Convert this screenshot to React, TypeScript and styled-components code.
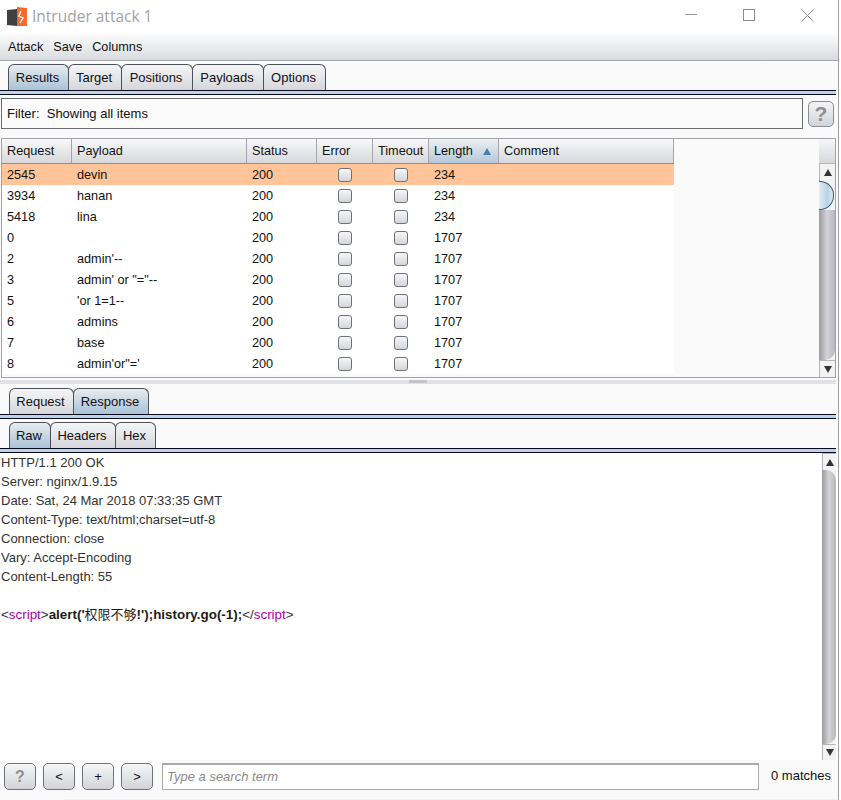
import React from "react";
import styled, { createGlobalStyle } from "styled-components";

const Global = createGlobalStyle`
  html, body { margin: 0; padding: 0; background: #fff; }
  body { font-family: "Liberation Sans", Arial, sans-serif; font-size: 12px; color: #111; }
  * { box-sizing: border-box; }
`;

const Frame = styled.div`
  width: 839px; height: 800px; display: flex; flex-direction: column;
  background: #fafafa; border-right: 1px solid #a0a0a0; overflow: hidden;
`;
const TitleBar = styled.div`
  height: 34px; flex: none; background: #fff; display: flex; align-items: center; padding: 0 1px 0 7px;
`;
const TitleText = styled.div`
  margin-left: 5px; font-family: "Open Sans", "Noto Sans", sans-serif; font-size: 15.5px; color: #a3a3a3; flex: 1; padding-bottom: 2px;
`;
const WinBtn = styled.div`
  width: 58.5px; height: 30px; display: flex; align-items: center; justify-content: center; margin-bottom: 4px;
  svg { display: block; }
`;
const MenuBar = styled.div`
  height: 27px; flex: none; display: flex; align-items: center; gap: 10px; padding: 0 0 0 8px; font-size: 12.7px;
  background: linear-gradient(#fbfbfb 0%, #f1f2f3 30%, #d9dbdf 100%); border-bottom: 1px solid #a3a5ab;
`;
const TabStrip = styled.div<{ $top: number; $left: number }>`
  display: flex; flex: none; padding: ${(p) => p.$top}px 0 0 ${(p) => p.$left}px; height: ${(p) => p.$top + 26}px;
`;
const Tab = styled.div<{ $active?: boolean; $w: number }>`
  width: ${(p) => p.$w}px; height: 26px; display: flex; align-items: center; justify-content: center; padding-right: 2px;
  font-size: 13px; margin-right: -1px; border: 1px solid #4d5058; border-bottom: none; border-radius: 6px 6px 0 0;
  background: ${(p) => p.$active ? "linear-gradient(#e9ecef 0%, #c8d6e3 50%, #aac3d8 100%)" : "linear-gradient(#f5f5f6, #d5d7dc)"};
`;
const TabRule = styled.div`
  flex: none; height: 5px; margin-right: 2px; background: #bdd3e6; border-top: 1px solid #0a0a1e; border-bottom: 1px solid #0a0a1e;
`;
const FilterRow = styled.div`
  display: flex; flex: none; align-items: center; padding: 3px 4px 0 1px; height: 34px;
`;
const FilterBox = styled.div`
  width: 802px; height: 31px; border: 1px solid #6b6b6b; display: flex; align-items: center; padding-left: 5px; font-size: 13px; background: #fbfbfb;
`;
const HelpBtn = styled.div`
  width: 26px; height: 26px; margin-left: 5px; border: 1px solid #8b8d92; border-radius: 5px; display: flex; align-items: center; justify-content: center;
  font: bold 21px "Liberation Sans", sans-serif; color: #8f8f8f; background: linear-gradient(#f4f4f5, #d3d5da);
`;
const TablePanel = styled.div`
  flex: none; margin: 9px 3px 0 1px; height: 240px; border: 1px solid #a0a2a8; display: flex; background: #fafafa; width: 835px;
`;
const TableCol = styled.div`
  width: 672px; flex: none; display: flex; flex-direction: column;
`;
const Row = styled.div<{ $hl?: boolean }>`
  display: grid; grid-template-columns: 70px 175px 70px 56px 56px 70px 175px; height: 21px; flex: none; align-items: center;
  background: ${(p) => (p.$hl ? "#ffc599" : "#fff")};
`;
const HeadRow = styled(Row)`
  height: 25px; background: none; border-bottom: 1px solid #8c8e94;
`;
const HeadCell = styled.div<{ $sorted?: boolean }>`
  height: 100%; display: flex; align-items: center; justify-content: space-between; padding: 0 5px; font-size: 12.7px;
  border-right: 1px solid #a3a5ab;
  background: ${(p) => p.$sorted ? "linear-gradient(#eef0f2, #b4c8da)" : "linear-gradient(#f8f8f9, #d6d8dc)"};
`;
const Cell = styled.div`
  padding-left: 5px; font-size: 12.7px; white-space: nowrap;
`;
const CheckCell = styled.div`
  display: flex; justify-content: center;
`;
const Check = styled.div`
  width: 14px; height: 14px; border: 1px solid #6f7178; border-radius: 3px; background: linear-gradient(#f7f7f8, #d4d6da);
`;
const SortMark = styled.div`
  width: 0; height: 0; border-left: 4px solid transparent; border-right: 4px solid transparent; border-bottom: 7px solid #4b7fae; margin-right: 2px;
`;
const TableScroll = styled.div`
  width: 16px; flex: none; margin-left: auto; display: flex; flex-direction: column; background: #f3f3f4;
`;
const ScrollCorner = styled.div`
  height: 24px; flex: none; background: linear-gradient(#f6f6f7, #d6d8dc);
`;
const ArrowBtn = styled.div<{ $down?: boolean; $h: number }>`
  height: ${(p) => p.$h}px; flex: none; display: flex; align-items: center; justify-content: center;
  background: #f3f3f4; border-left: 1px solid #b5b6ba; border-top: 1px solid #b5b6ba;
  &::after {
    content: ""; width: 0; height: 0; border-left: 4px solid transparent; border-right: 4px solid transparent;
    ${(p) => (p.$down ? "border-top: 7px solid #333;" : "border-bottom: 7px solid #333;")}
  }
`;
const Knob = styled.div`
  height: 29px; flex: none; width: 15px; border: 1px solid #3f5a76; border-left: none;
  border-radius: 0 14px 14px 0; background: linear-gradient(90deg, #e3edf5, #b9d2e6 60%, #dfe9f1);
`;
const Thumb = styled.div<{ $roundTop?: boolean }>`
  flex: 1; border-bottom-right-radius: 10px; border-top-right-radius: ${(p) => (p.$roundTop ? "10px" : "0")};
  background: linear-gradient(90deg, #9b9b9e 0%, #d4d4d8 50%, #b7b7bb 100%);
`;
const Splitter = styled.div`
  flex: none; height: 10px; padding-top: 2px;
`;
const SplitLine = styled.div`
  height: 4px; margin-right: 2px; background: #dfe1e5; display: flex; justify-content: center;
`;
const Grip = styled.div`
  width: 18px; height: 3px; background: #c2c4c8;
`;
const ContentRow = styled.div`
  flex: 1; display: flex; min-height: 0; background: #fff;
`;
const Raw = styled.div`
  flex: 1; font-size: 13px; color: #333; line-height: 19px;
`;
const Line = styled.div`
  height: 19px; padding-left: 1px; white-space: pre;
`;
const MarkupLine = styled(Line)`
  font-size: 13.4px;
`;
const Tag = styled.span` color: #b000b0; `;
const Bold = styled.span` font-weight: bold; color: #1c1c1c; `;
const Cjk = styled.span`
  font-family: "Noto Sans CJK SC", sans-serif; font-weight: 400; font-size: 13px; line-height: 0;
`;
const RawScroll = styled.div`
  width: 14px; flex: none; margin-right: 2px; display: flex; flex-direction: column; background: #f3f3f4;
`;
const BottomBar = styled.div`
  flex: none; height: 35px; display: flex; align-items: flex-start; padding: 3px 0 0 4px; margin-bottom: 4px;
`;
const BottomEdge = styled.div`
  flex: none; height: 1px; margin-left: 63px; background: #fdeeee;
`;
const NavBtn = styled.div<{ $help?: boolean }>`
  width: 32px; height: 27px; margin-right: 7px; border: 1px solid #6f7178; border-radius: 5px; display: flex; align-items: center; justify-content: center;
  background: linear-gradient(#f6f6f7, #d2d4d9); font-size: ${(p) => (p.$help ? "16px" : "13px")};
  font-weight: ${(p) => (p.$help ? "bold" : "normal")}; color: ${(p) => (p.$help ? "#8f8f8f" : "#111")};
`;
const SearchBox = styled.div`
  width: 597px; height: 27px; margin-left: 2px; border: 1px solid #a9a9a9; border-top-width: 2px; background: #fff; display: flex; align-items: center; padding: 0 0 2px 4px;
  font-style: italic; font-size: 13px; color: #8a8a8a;
`;
const Matches = styled.div`
  margin-left: 12px; font-size: 13px; line-height: 26px; white-space: nowrap;
`;

const rows = [
  ["2545", "devin", "234"], ["3934", "hanan", "234"], ["5418", "lina", "234"], ["0", "", "1707"], ["2", "admin'--", "1707"],
  ["3", "admin' or \"=\"--", "1707"], ["5", "'or 1=1--", "1707"], ["6", "admins", "1707"], ["7", "base", "1707"], ["8", "admin'or\"='", "1707"],
];
const mainTabs: [string, number][] = [["Results", 61], ["Target", 54], ["Positions", 72], ["Payloads", 72], ["Options", 63]];
const headers = ["Request", "Payload", "Status", "Error", "Timeout", "Length", "Comment"];

export default function App() {
  return (
    <Frame>
      <Global />
      <TitleBar>
        <svg width="20" height="20" viewBox="0 0 20 20">
          <polygon points="0,3 10,2 10,19 0,18" fill="#3f3f3f" />
          <polygon points="10,0 20,1 20,19 10,19" fill="#f26b2a" />
          <path d="M14 4 L12 9 L16 11 L13 16" stroke="#fff" strokeWidth="1.3" fill="none" />
        </svg>
        <TitleText>Intruder attack 1</TitleText>
        <WinBtn><svg width="12" height="2"><rect width="12" height="1" fill="#999" /></svg></WinBtn>
        <WinBtn><svg width="12" height="12"><rect x=".5" y=".5" width="11" height="11" fill="none" stroke="#8a8a8a" /></svg></WinBtn>
        <WinBtn><svg width="13" height="13"><path d="M.5 .5 L12.5 12.5 M12.5 .5 L.5 12.5" stroke="#8a8a8a" /></svg></WinBtn>
      </TitleBar>
      <MenuBar><span>Attack</span><span>Save</span><span>Columns</span></MenuBar>
      <TabStrip $top={3} $left={8}>
        {mainTabs.map(([t, w], i) => <Tab key={t} $w={w} $active={i === 0}>{t}</Tab>)}
      </TabStrip>
      <TabRule />
      <FilterRow>
        <FilterBox>Filter:&nbsp; Showing all items</FilterBox>
        <HelpBtn>?</HelpBtn>
      </FilterRow>
      <TablePanel>
        <TableCol>
          <HeadRow>
            {headers.map((h) => (
              <HeadCell key={h} $sorted={h === "Length"}>{h}{h === "Length" && <SortMark />}</HeadCell>
            ))}
          </HeadRow>
          {rows.map((r, i) => (
            <Row key={r[0]} $hl={i === 0}>
              <Cell>{r[0]}</Cell>
              <Cell>{r[1]}</Cell>
              <Cell>200</Cell>
              <CheckCell><Check /></CheckCell>
              <CheckCell><Check /></CheckCell>
              <Cell>{r[2]}</Cell>
              <Cell />
            </Row>
          ))}
        </TableCol>
        <TableScroll>
          <ScrollCorner />
          <ArrowBtn $h={18} />
          <Knob />
          <Thumb />
          <ArrowBtn $h={17} $down />
        </TableScroll>
      </TablePanel>
      <Splitter><SplitLine><Grip /></SplitLine></Splitter>
      <TabStrip $top={0} $left={9}>
        <Tab $w={65}>Request</Tab>
        <Tab $w={76} $active>Response</Tab>
      </TabStrip>
      <TabRule />
      <TabStrip $top={3} $left={9}>
        <Tab $w={42} $active>Raw</Tab>
        <Tab $w={66}>Headers</Tab>
        <Tab $w={41}>Hex</Tab>
      </TabStrip>
      <TabRule />
      <ContentRow>
        <Raw>
          <Line>HTTP/1.1 200 OK</Line>
          <Line>Server: nginx/1.9.15</Line>
          <Line>Date: Sat, 24 Mar 2018 07:33:35 GMT</Line>
          <Line>Content-Type: text/html;charset=utf-8</Line>
          <Line>Connection: close</Line>
          <Line>Vary: Accept-Encoding</Line>
          <Line>Content-Length: 55</Line>
          <Line />
          <MarkupLine>
            &lt;<Tag>script</Tag>&gt;<Bold>alert('<Cjk>权限不够</Cjk>!');history.go(-1);</Bold>&lt;/<Tag>script</Tag>&gt;
          </MarkupLine>
        </Raw>
        <RawScroll>
          <ArrowBtn $h={17} />
          <Thumb $roundTop />
          <ArrowBtn $h={16} $down />
        </RawScroll>
      </ContentRow>
      <BottomBar>
        <NavBtn $help>?</NavBtn>
        <NavBtn>&lt;</NavBtn>
        <NavBtn>+</NavBtn>
        <NavBtn>&gt;</NavBtn>
        <SearchBox>Type a search term</SearchBox>
        <Matches>0 matches</Matches>
      </BottomBar>
      <BottomEdge />
    </Frame>
  );
}
